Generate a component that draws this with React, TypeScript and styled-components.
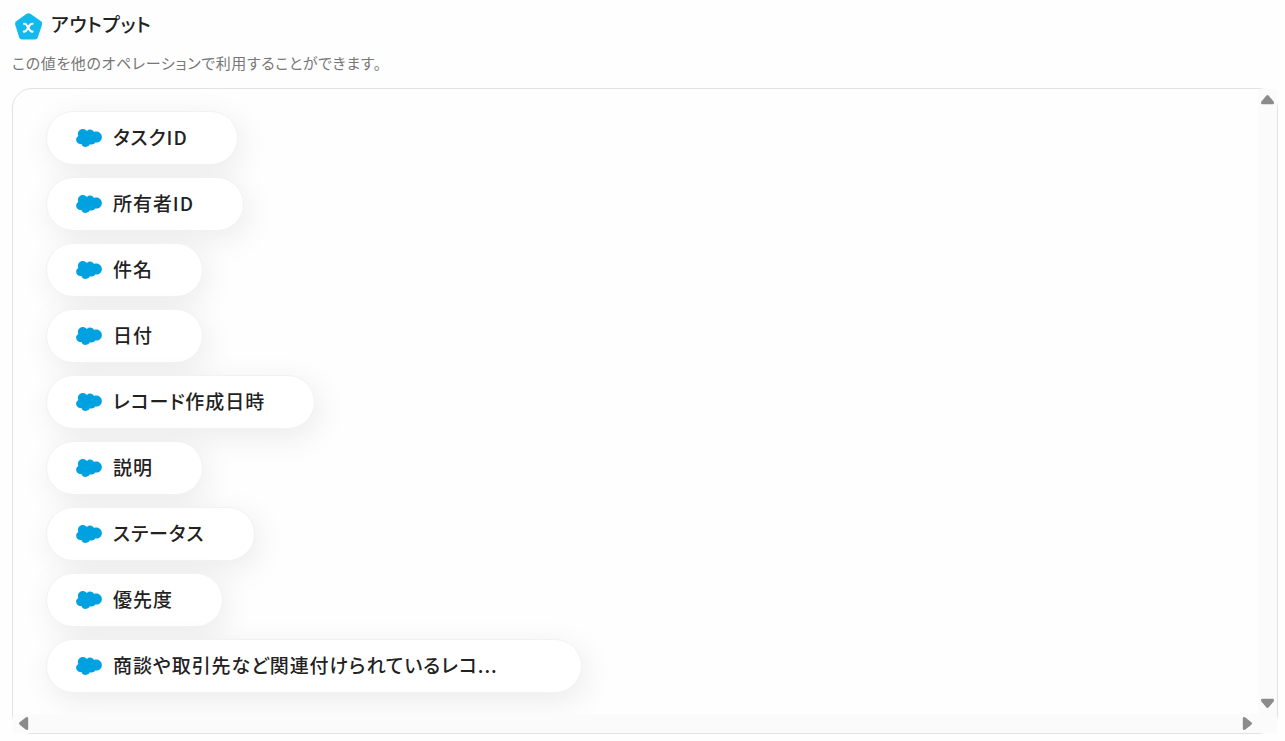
import React from "react";
import styled, { createGlobalStyle } from "styled-components";

const GlobalStyle = createGlobalStyle`
  *, *::before, *::after { box-sizing: border-box; }
  body {
    margin: 0;
    background: #fefefe;
    color: #222;
    font-family: "Noto Sans CJK JP", sans-serif;
    font-feature-settings: "palt";
    letter-spacing: 0.04em;
  }
`;

const Page = styled.main`
  display: flex;
  flex-direction: column;
  min-height: 100vh;
  padding: 8px 7px 7px 12px;
`;

const Header = styled.header`
  display: flex;
  align-items: center;
  gap: 7px;
  height: 36px;
  padding-left: 2px;
`;

const Title = styled.h1`
  margin: 0;
  padding-bottom: 4px;
  font-size: 19px;
  line-height: 32px;
  font-weight: 500;
`;

const Description = styled.p`
  margin: 7px 0 13px;
  font-size: 15px;
  line-height: 24px;
  color: #777;
`;

const Frame = styled.section`
  flex: 1;
  display: grid;
  grid-template-columns: minmax(0, 1fr) 19px;
  grid-template-rows: 1fr 19px;
  border: 1px solid #e2e2e2;
  border-radius: 20px;
`;

const OutputList = styled.ul`
  display: flex;
  flex-direction: column;
  align-items: flex-start;
  gap: 12px;
  margin: 0;
  padding: 22px 33px 20px;
  list-style: none;
  overflow: hidden;
  border-top-left-radius: 19px;
`;

const OutputItem = styled.li`
  display: flex;
  max-width: 100%;
`;

const Pill = styled.button<{ $wide?: boolean }>`
  display: flex;
  align-items: center;
  gap: 11px;
  height: 54px;
  width: ${(p) => (p.$wide ? "536px" : "auto")};
  max-width: 100%;
  padding: 0 49px 0 29px;
  border: 1px solid #f2f2f2;
  border-radius: 27px;
  background: #fff;
  box-shadow: 4px 8px 32px rgba(0, 0, 0, 0.08);
  color: inherit;
  font: inherit;
  font-feature-settings: inherit;
  cursor: pointer;
`;

const PillLabel = styled.span`
  padding-bottom: 2px;
  overflow: hidden;
  text-overflow: ellipsis;
  white-space: nowrap;
  font-size: 19px;
  line-height: 28px;
  font-weight: 500;
  letter-spacing: 0.05em;
`;

const CloudSvg = styled.svg`
  flex: none;
  width: 26px;
  height: 18px;
`;

const VerticalBar = styled.div`
  display: flex;
  flex-direction: column;
  justify-content: space-between;
  background: #fbfbfb;
`;

const HorizontalBar = styled.div`
  display: flex;
  justify-content: space-between;
  background: #fbfbfb;
`;

const Corner = styled.div`
  background: #fbfbfb;
`;

const ArrowButton = styled.button`
  display: flex;
  align-items: center;
  justify-content: center;
  width: 19px;
  height: 19px;
  padding: 0;
  border: 0;
  background: transparent;
  color: #8b8b8b;
`;

const rotations = { up: 0, right: 90, down: 180, left: 270 };

function ScrollArrow({ direction }: { direction: keyof typeof rotations }) {
  return (
    <ArrowButton type="button" aria-label={`Scroll ${direction}`}>
      <svg width="19" height="19" viewBox="0 0 19 19" aria-hidden="true">
        <path
          transform={`rotate(${rotations[direction]} 9.5 9.5)`}
          d="M8.2 6.7Q9.5 5.2 10.8 6.7L15.6 12.6Q16.6 14.8 15 15.2H4Q2.4 14.8 3.4 12.6Z"
          fill="currentColor"
        />
      </svg>
    </ArrowButton>
  );
}

function PentagonIcon() {
  return (
    <svg width="30" height="30" viewBox="0 0 30 30" aria-hidden="true">
      <path
        d="M12.6 2.8Q14.5 1.5 16.4 2.8L27 10.3Q28.6 11.7 28 13.7L23.8 26.5Q23 28.5 21 28.5H8Q6 28.5 5.2 26.5L1.2 13.7Q.6 11.7 2.2 10.3Z"
        fill="#12b9ec"
      />
      <path
        d="M10 12.8H10.6C12.5 12.8 13 14.8 14.2 16.7S16.1 20.6 18 20.6H18.6M18.6 12.8H18C16.1 12.8 15.4 14.8 14.2 16.7S12.3 20.6 10.4 20.6H9.8"
        fill="none"
        stroke="#fff"
        strokeWidth="2.1"
        strokeLinecap="round"
      />
    </svg>
  );
}

function CloudIcon() {
  return (
    <CloudSvg viewBox="0 3.6 24 16.8" aria-hidden="true">
      <path
        fill="#00a1e0"
        d="M10.006 5.415a4.195 4.195 0 0 1 3.045-1.306c1.56 0 2.954.9 3.69 2.205.63-.3 1.35-.45 2.1-.45 2.85 0 5.159 2.34 5.159 5.22s-2.31 5.22-5.176 5.22c-.345 0-.69-.044-1.02-.104a3.75 3.75 0 0 1-3.3 1.95c-.6 0-1.155-.15-1.65-.375A4.314 4.314 0 0 1 8.88 20.4a4.302 4.302 0 0 1-4.05-2.82c-.27.062-.54.076-.825.076C1.801 17.656 0 15.856 0 13.606c0-1.5.811-2.805 2.01-3.51-.255-.57-.39-1.2-.39-1.846 0-2.58 2.1-4.65 4.65-4.65 1.53 0 2.866.72 3.736 1.815Z"
      />
    </CloudSvg>
  );
}

const outputs: { label: string; wide?: boolean }[] = [
  { label: "タスクID" },
  { label: "所有者ID" },
  { label: "件名" },
  { label: "日付" },
  { label: "レコード作成日時" },
  { label: "説明" },
  { label: "ステータス" },
  { label: "優先度" },
  { label: "商談や取引先など関連付けられているレコ...", wide: true },
];

export default function App() {
  return (
    <>
      <GlobalStyle />
      <Page>
        <Header>
          <PentagonIcon />
          <Title>アウトプット</Title>
        </Header>
        <Description>この値を他のオペレーションで利用することができます。</Description>
        <Frame>
          <OutputList>
            {outputs.map(({ label, wide }) => (
              <OutputItem key={label}>
                <Pill type="button" $wide={wide}>
                  <CloudIcon />
                  <PillLabel>{label}</PillLabel>
                </Pill>
              </OutputItem>
            ))}
          </OutputList>
          <VerticalBar>
            <ScrollArrow direction="up" />
            <ScrollArrow direction="down" />
          </VerticalBar>
          <HorizontalBar>
            <ScrollArrow direction="left" />
            <ScrollArrow direction="right" />
          </HorizontalBar>
          <Corner />
        </Frame>
      </Page>
    </>
  );
}
